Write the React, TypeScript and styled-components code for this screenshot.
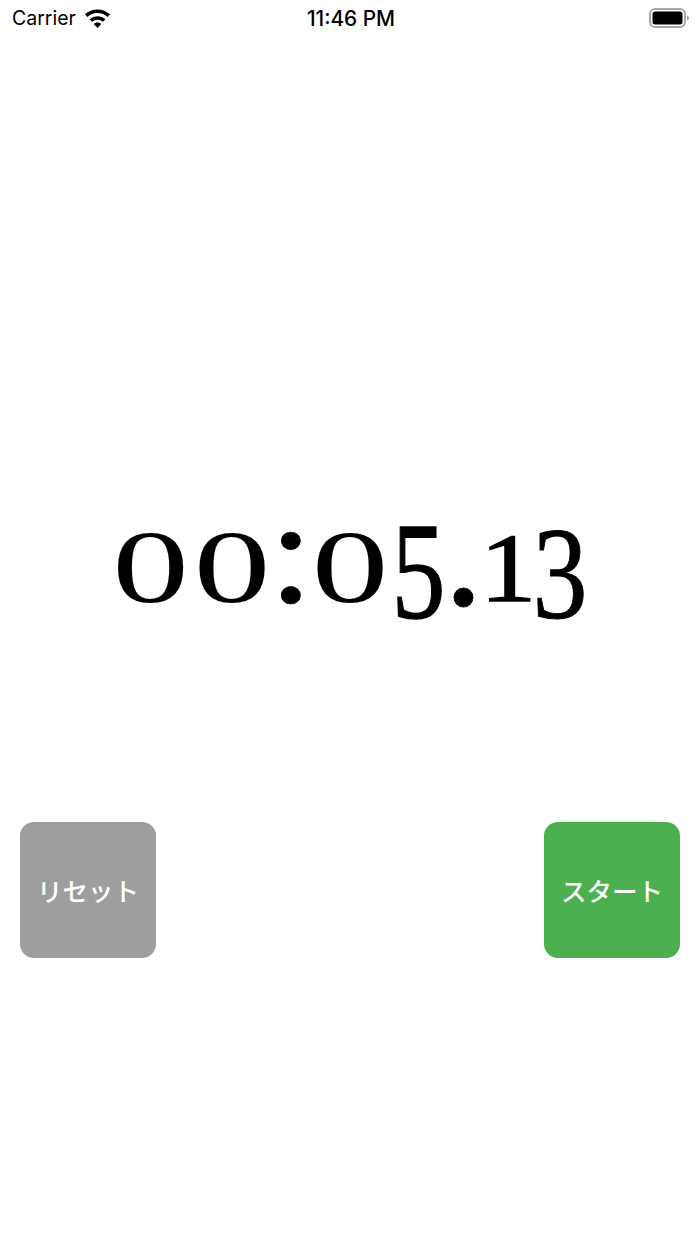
import React from "react";
import styled, { createGlobalStyle } from "styled-components";

const GlobalStyle = createGlobalStyle`
  html, body {
    margin: 0;
    padding: 0;
    background: #ffffff;
  }
`;

const Screen = styled.div`
  width: 700px;
  height: 1244px;
  display: flex;
  flex-direction: column;
  overflow: hidden;
  background: #ffffff;
  color: #000000;
`;

const StatusBar = styled.div`
  height: 36px;
  padding: 0 10px 0 12px;
  display: grid;
  grid-template-columns: 1fr auto 1fr;
  align-items: center;
  font-family: Inter, "Liberation Sans", sans-serif;
`;

const Carrier = styled.div`
  display: flex;
  align-items: center;
  gap: 7px;
  font-size: 19.5px;
`;

const Clock = styled.div`
  font-size: 20.8px;
  font-weight: 500;
`;

const BatteryWrap = styled.div`
  display: flex;
  justify-content: flex-end;
`;

const TimerArea = styled.div`
  margin-top: 483px;
  height: 110px;
  padding-right: 6px;
  display: flex;
  justify-content: center;
  align-items: center;
`;

const Glyph = styled.span<{ $w: number; $sx: number; $sy: number; $dy: number; $stroke: number }>`
  display: inline-block;
  width: ${(p) => p.$w}px;
  text-align: center;
  font-family: "Liberation Serif", serif;
  font-size: 108px;
  line-height: 110px;
  -webkit-text-stroke: ${(p) => p.$stroke}px #000000;
  transform: translateY(${(p) => p.$dy}px) scale(${(p) => p.$sx}, ${(p) => p.$sy});
`;

const Buttons = styled.div`
  margin-top: 193px;
  padding: 0 20px;
  display: flex;
  justify-content: space-between;
`;

const ActionButton = styled.button<{ $color: string }>`
  width: 136px;
  height: 136px;
  border: none;
  border-radius: 14px;
  padding: 0 0 2px;
  background: ${(p) => p.$color};
  color: #ffffff;
  font-family: "Noto Sans CJK JP", sans-serif;
  font-size: 25.5px;
  font-weight: 500;
`;

const WifiIcon = () => (
  <svg width="29" height="22" viewBox="0 0 26 20">
    <path d="M13 2.2c4.4 0 8.4 1.7 11.4 4.5l-2.2 2.4A13.400 13.400 0 0 0 13 5.500 13.400 13.400 0 0 0 3.800 9.100L1.600 6.700A16.600 16.600 0 0 1 13 2.200z" />
    <path d="M13 8.300c2.800 0 5.300 1 7.200 2.800l-2.300 2.400A7.300 7.300 0 0 0 13 11.600a7.300 7.300 0 0 0-4.900 1.900l-2.300-2.400A10.500 10.500 0 0 1 13 8.300z" />
    <path d="M13 14.200c1.300 0 2.500.5 3.400 1.300L13 19l-3.400-3.500c.9-.8 2.100-1.300 3.400-1.300z" />
  </svg>
);

const BatteryIcon = () => (
  <svg width="41" height="22" viewBox="0 0 41 22">
    <rect x="1" y="2" width="35" height="18" rx="5" fill="none" stroke="#a8a8a8" strokeWidth="2" />
    <rect x="3.500" y="4.500" width="30" height="13" rx="2.500" fill="#000000" />
    <path d="M38 8.500c1.300.3 2 1.300 2 2.500s-.7 2.200-2 2.500z" fill="#a8a8a8" />
  </svg>
);

const digits = [
  { ch: "0", w: 81, sx: 1.42, sy: 0.97, dy: -7, stroke: 0.1 },
  { ch: "0", w: 82, sx: 1.42, sy: 0.97, dy: -7, stroke: 0.1 },
  { ch: ":", w: 36, sx: 1.5, sy: 1.38, dy: -21.5, stroke: 0.5 },
  { ch: "0", w: 82, sx: 1.42, sy: 0.97, dy: -7, stroke: 0.1 },
  { ch: "5", w: 55, sx: 1.0, sy: 1.28, dy: -2, stroke: 1 },
  { ch: ".", w: 35, sx: 1.5, sy: 1.5, dy: -23, stroke: 0.5 },
  { ch: "1", w: 52, sx: 1.05, sy: 0.91, dy: -5.5, stroke: 1.4 },
  { ch: "3", w: 51, sx: 1.02, sy: 1.22, dy: 0.5, stroke: 0.8 },
];

export default function App() {
  return (
    <Screen>
      <GlobalStyle />
      <StatusBar>
        <Carrier>
          Carrier
          <WifiIcon />
        </Carrier>
        <Clock>11:46 PM</Clock>
        <BatteryWrap>
          <BatteryIcon />
        </BatteryWrap>
      </StatusBar>
      <TimerArea>
        {digits.map((d, i) => (
          <Glyph key={i} $w={d.w} $sx={d.sx} $sy={d.sy} $dy={d.dy} $stroke={d.stroke}>
            {d.ch}
          </Glyph>
        ))}
      </TimerArea>
      <Buttons>
        <ActionButton $color="#9e9e9e">リセット</ActionButton>
        <ActionButton $color="#4caf50">スタート</ActionButton>
      </Buttons>
    </Screen>
  );
}
